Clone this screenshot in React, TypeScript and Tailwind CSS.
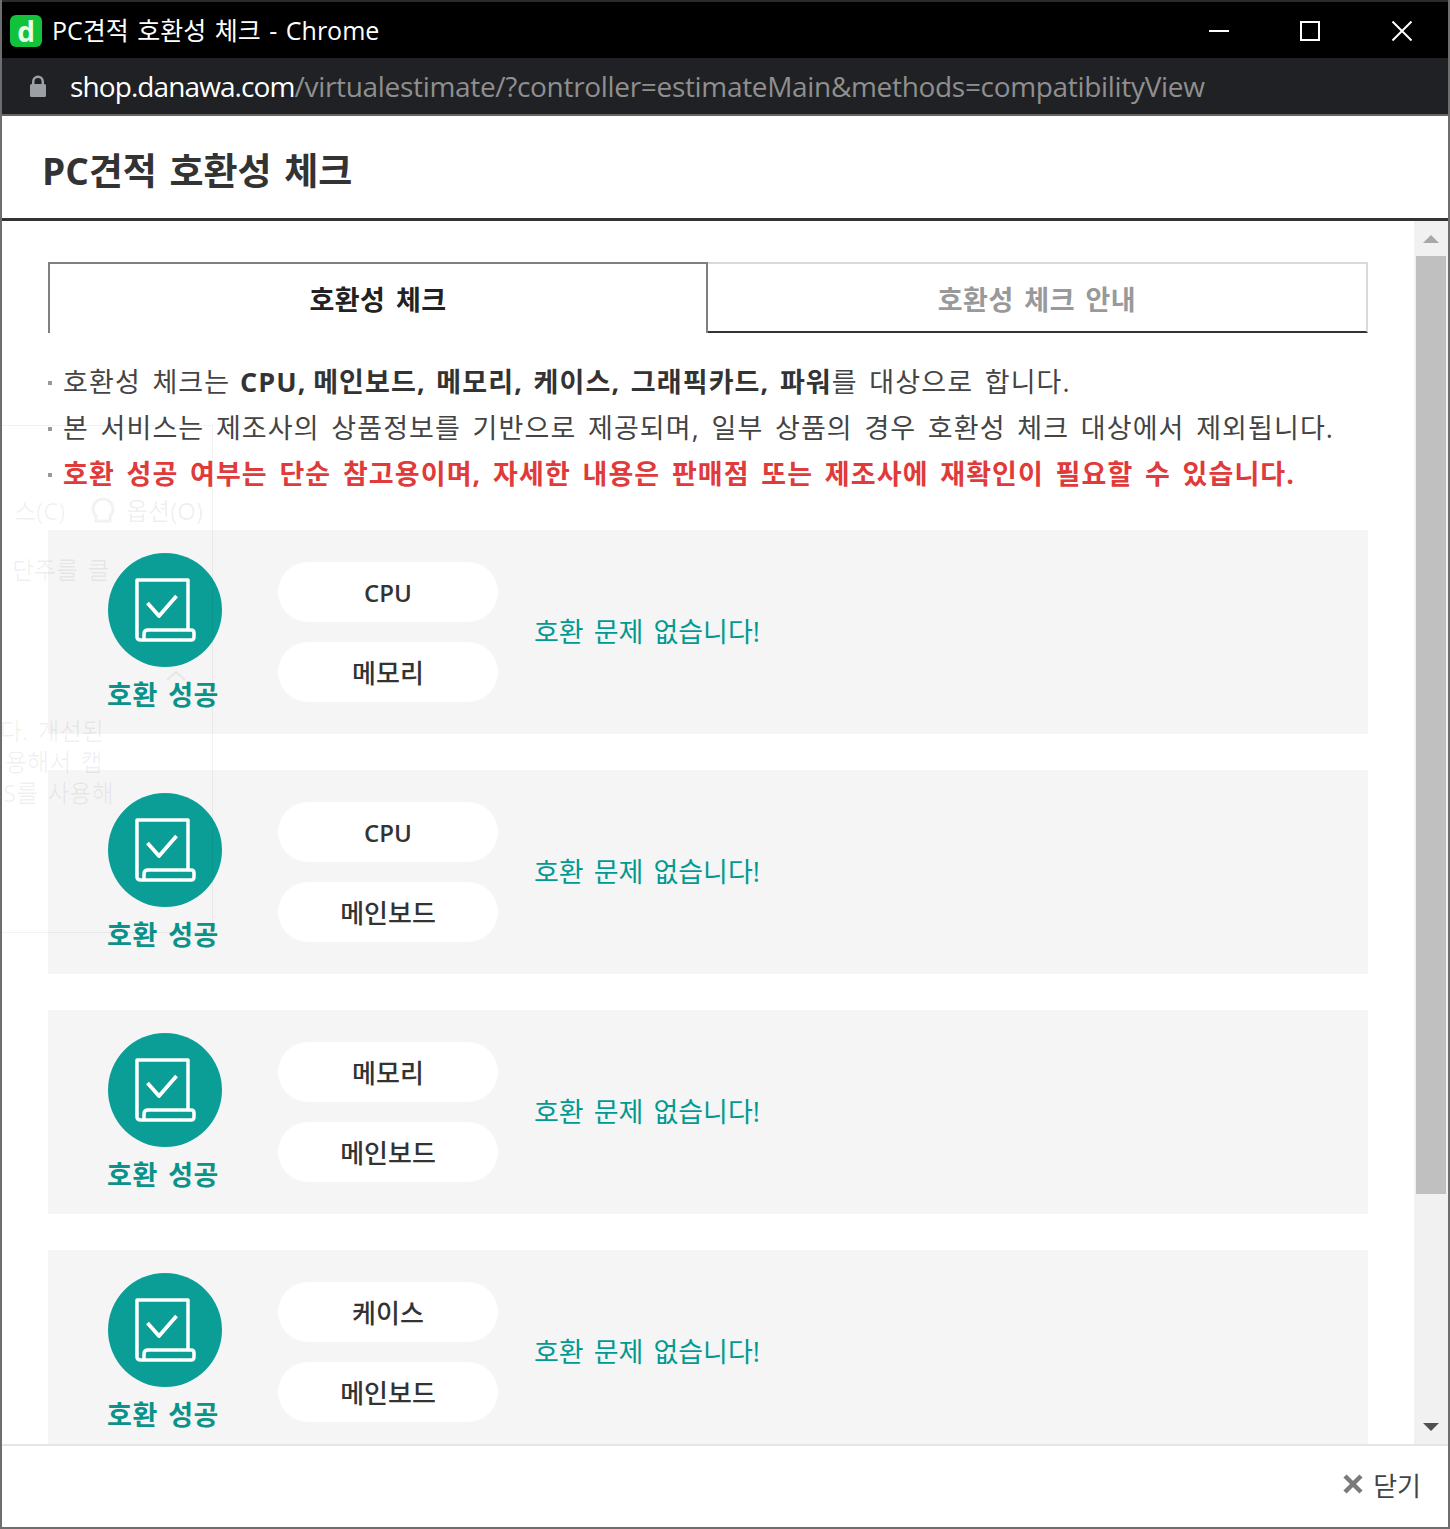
import {FC} from 'react';

const font = "font-['Open_Sans','Noto_Sans_CJK_KR',sans-serif]";

const checks = [
  {top: 'CPU', bottom: '메모리'},
  {top: 'CPU', bottom: '메인보드'},
  {top: '메모리', bottom: '메인보드'},
  {top: '케이스', bottom: '메인보드'},
];

const BookIcon: FC = () => (
  <svg className="h-[114px] w-[114px] shrink-0" fill="none" viewBox="0 0 114 114">
    <circle cx="57" cy="57" fill="#0b9e97" r="57" />
    <g stroke="#fff" strokeLinejoin="round" strokeWidth="3.5">
      <path d="M29 81V27H80V77" />
      <path d="M29 80V84Q29 87 33 87H83Q86 87 86 84V80Q86 77 83 77H40Q36 77 36 81V87" />
      <path d="M39.5 50L51 63L68.5 43" strokeWidth="3.8" />
    </g>
  </svg>
);

const Pill: FC<{label: string}> = ({label}) => (
  <div
    className={
      label === 'CPU'
        ? 'flex h-[60px] w-[220px] items-center justify-center rounded-full bg-white pt-[2px] text-[24px] font-semibold text-[#333]'
        : 'flex h-[60px] w-[220px] items-center justify-center rounded-full bg-white pt-[2px] text-[26px] font-medium text-[#333]'
    }>
    {label}
  </div>
);

const CheckRow: FC<{top: string; bottom: string}> = ({top, bottom}) => (
  <div className="flex h-[204px] shrink-0 items-start bg-[#f5f5f5] pl-[60px]">
    <div className="flex w-[114px] flex-col items-center pt-[23px]">
      <BookIcon />
      <span className="mt-[9px] mr-[4px] whitespace-nowrap text-[27px] leading-[38px] font-bold tracking-[0.5px] text-[#0b9289] [word-spacing:3px]">
        호환 성공
      </span>
    </div>
    <div className="ml-[56px] flex flex-col gap-[20px] pt-[32px]">
      <Pill label={top} />
      <Pill label={bottom} />
    </div>
    <p className="ml-[36px] pt-[81px] text-[27px] leading-[42px] text-[#009a93] [word-spacing:3px]">호환 문제 없습니다!</p>
  </div>
);

const Bullet: FC = () => <span className="absolute top-[22px] left-[-15px] h-[4px] w-[4px] bg-[#999]" />;

export default function App() {
  return (
    <div className={`relative flex h-[1529px] w-[1450px] flex-col overflow-hidden border-x-2 border-b-2 border-[#6e6e6e] bg-white ${font}`}>
      {/* title bar */}
      <div className="flex h-[58px] shrink-0 items-center border-t-2 border-[#2b2b2b] bg-black pt-[2px] pl-[8px] text-white">
        <div className="flex h-[32px] w-[32px] items-center justify-center rounded-[6px] bg-[#12c23a] text-[28px] leading-none font-bold text-[#e6ffe6]">
          d
        </div>
        <span className="ml-[10px] text-[25px] [word-spacing:2px]">PC견적 호환성 체크 - Chrome</span>
        <div className="ml-auto flex items-center">
          <span className="mr-[71px] h-[2px] w-[20px] bg-white" />
          <span className="mr-[72px] h-[20px] w-[20px] border-2 border-white" />
          <svg className="mr-[36px] h-[20px] w-[20px]" fill="none" stroke="#fff" strokeWidth="2" viewBox="0 0 20 20">
            <path d="M0.500 0.500L19.500 19.500M19.500 0.500L0.500 19.500" />
          </svg>
        </div>
      </div>

      {/* address bar */}
      <div className="flex h-[58px] shrink-0 items-center border-b-2 border-[#666] bg-[#202124] pl-[28px] text-[28px] whitespace-nowrap">
        <svg className="h-[22px] w-[16px]" fill="#9aa0a6" viewBox="0 0 16 22">
          <path d="M2 9V6.5a6 6 0 0 1 12 0V9h.5A1.5 1.5 0 0 1 16 10.500V20.500A1.500 1.500 0 0 1 14.500 22H1.500A1.500 1.500 0 0 1 0 20.500V10.500A1.500 1.500 0 0 1 1.500 9ZM4.500 9h7V6.500a3.500 3.500 0 0 0-7 0Z" />
        </svg>
        <span className="ml-[24px] tracking-[-0.9px] text-white">shop.danawa.com</span>
        <span className="tracking-[-0.32px] text-[#8f8f8f]">/virtualestimate/?controller=estimateMain&amp;methods=compatibilityView</span>
      </div>

      {/* modal header */}
      <header className="flex h-[105px] shrink-0 items-center border-b-[3px] border-[#333] pt-[8px] pl-[40px]">
        <h1 className="text-[37px] font-bold text-[#333] [word-spacing:3px]">PC견적 호환성 체크</h1>
      </header>

      {/* modal body */}
      <div className="flex min-h-0 flex-1">
        <div className="min-w-0 flex-1 overflow-hidden pt-[41px] pl-[46px]">
          <div className="w-[1320px]">
            <div className="flex h-[71px]">
              <div className="flex w-[660px] items-center justify-center border-x-2 border-t-2 border-[#808080] pt-[3px] text-[27px] font-bold tracking-[0.5px] text-[#222] [word-spacing:3px]">
                호환성 체크
              </div>
              <div className="flex w-[660px] items-center justify-center border-t-2 border-r-2 border-b-2 border-t-[#d9d9d9] border-r-[#d9d9d9] border-b-[#333] pt-[5px] text-[27px] font-bold tracking-[0.5px] text-[#999] [word-spacing:3px]">
                호환성 체크 안내
              </div>
            </div>
            <ul className="mt-[26px] pl-[15px] text-[27px] leading-[46px] tracking-[1.1px] text-[#444] [word-spacing:3.5px]">
              <li className="relative whitespace-nowrap">
                <Bullet />
                호환성 체크는{' '}
                <b className="-ml-[2px] font-bold text-[#333] [word-spacing:2.5px]">
                  <span className="-mr-[4px] inline-block">CPU,</span> 메인보드, 메모리, 케이스, 그래픽카드, 파워
                </b>
                를 대상으로 합니다.
              </li>
              <li className="relative whitespace-nowrap">
                <Bullet />
                본 서비스는 제조사의 상품정보를 기반으로 제공되며, 일부 상품의 경우 호환성 체크 대상에서 제외됩니다.
              </li>
              <li className="relative font-bold whitespace-nowrap text-[#e03a3a]">
                <Bullet />
                호환 성공 여부는 단순 참고용이며, 자세한 내용은 판매점 또는 제조사에 재확인이 필요할 수 있습니다.
              </li>
            </ul>
            <div className="mt-[33px] flex flex-col gap-[36px]">
              {checks.map(check => (
                <CheckRow bottom={check.bottom} key={check.top + check.bottom} top={check.top} />
              ))}
            </div>
          </div>
        </div>

        {/* scrollbar */}
        <div className="flex w-[34px] shrink-0 flex-col items-center bg-[#f1f1f1] px-[2px]">
          <div className="flex h-[35px] shrink-0 items-center justify-center">
            <span className="h-0 w-0 border-x-[8px] border-b-[8px] border-x-transparent border-b-[#a8a8a8]" />
          </div>
          <div className="h-[938px] w-full shrink-0 bg-[#c0c0c0]" />
          <div className="mt-auto flex h-[35px] shrink-0 items-center justify-center">
            <span className="h-0 w-0 border-x-[8px] border-t-[8px] border-x-transparent border-t-[#505050]" />
          </div>
        </div>
      </div>

      {/* modal footer */}
      <footer className="flex h-[83px] shrink-0 items-center justify-end border-t-2 border-[#e5e5e5] pr-[27px]">
        <svg className="mb-[6px] h-[20px] w-[20px]" fill="none" stroke="#7a7a7a" strokeWidth="4.500" viewBox="0 0 20 20">
          <path d="M2 2L18 18M18 2L2 18" />
        </svg>
        <span className="ml-[10px] text-[26px] text-[#444]">닫기</span>
      </footer>

      {/* faint page showing through the popup */}
      <div className="pointer-events-none absolute top-[425px] left-[-2px] h-[508px] w-[213px] border-t border-r border-b border-black/[0.05]" />
      <div className="pointer-events-none absolute top-[630px] left-[-2px] h-[180px] w-[2px] bg-[#7d6a20]" />
      <div className="pointer-events-none absolute top-[493px] left-[12px] text-[24px] text-black/[0.06]">스(C)</div>
      <svg className="pointer-events-none absolute top-[497px] left-[88px] h-[28px] w-[26px]" fill="none" stroke="#000" strokeOpacity="0.05" strokeWidth="3" viewBox="0 0 26 28">
        <path d="M13 2a10 10 0 0 1 7 17v5H6v-5a10 10 0 0 1 7-17Z" />
      </svg>
      <div className="pointer-events-none absolute top-[493px] left-[124px] text-[24px] text-black/[0.07]">옵션(O)</div>
      <div className="pointer-events-none absolute top-[552px] left-[10px] text-[24px] text-black/[0.06] [word-spacing:3px]">단주를 클</div>
      <svg className="pointer-events-none absolute top-[671px] left-[164px] h-[10px] w-[20px]" fill="none" stroke="#000" strokeOpacity="0.06" strokeWidth="2" viewBox="0 0 20 10">
        <path d="M1 9L10 1L19 9" />
      </svg>
      <div className="pointer-events-none absolute top-[713px] left-[-2px] text-[24px] text-black/[0.06] [word-spacing:3px]">다. 개선된</div>
      <div className="pointer-events-none absolute top-[744px] left-[3px] text-[24px] text-black/[0.06] [word-spacing:3px]">용해서 캡</div>
      <div className="pointer-events-none absolute top-[775px] left-[1px] text-[24px] text-black/[0.06] [word-spacing:3px]">S를 사용해</div>
      {/* window behind, seen along the frame */}
      <div className="pointer-events-none absolute top-[908px] left-[-2px] h-[4px] w-[2px] bg-[#222]" />
      <div className="pointer-events-none absolute top-[921px] left-[-2px] h-[4px] w-[2px] bg-[#222]" />
      <div className="pointer-events-none absolute top-[969px] left-[-2px] h-[2px] w-[2px] bg-[#333]" />
      <div className="pointer-events-none absolute top-[629px] right-[-2px] h-[65px] w-[2px] bg-[#2f3f6e]" />
      <div className="pointer-events-none absolute top-[705px] right-[-2px] h-[103px] w-[2px] bg-[#2f3f6e]" />
      <div className="pointer-events-none absolute top-[908px] right-[-2px] h-[4px] w-[2px] bg-[#222]" />
      <div className="pointer-events-none absolute top-[914px] right-[-2px] h-[4px] w-[2px] bg-[#222]" />
      <div className="pointer-events-none absolute top-[922px] right-[-2px] h-[4px] w-[2px] bg-[#222]" />
    </div>
  );
}
